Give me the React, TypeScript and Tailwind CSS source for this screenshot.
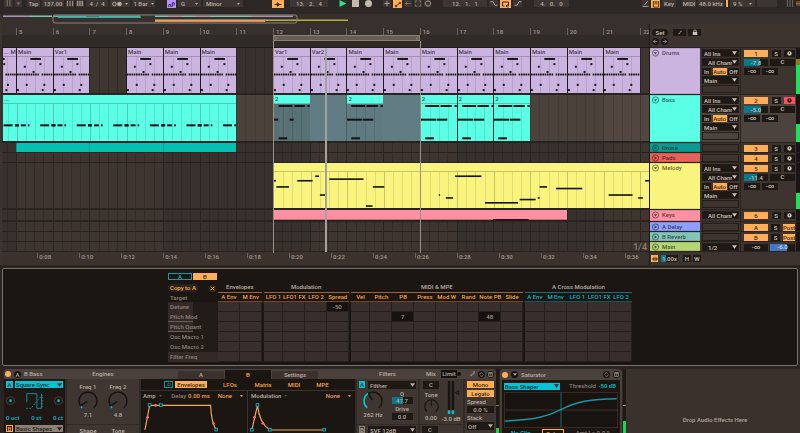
import { clsx } from "clsx";
import type { ReactNode } from "react";

const FIRST_BAR = 4.62;
const BARS = 17.62;

const pct = (bars: number) => `${(bars / BARS) * 100}%`;
const at = (bar: number) => pct(bar - FIRST_BAR);

type Note = [x: number, y: number, w: number];

// note tables use 110 units to the bar, 111 units top to bottom
const DRUM_NOTES: Note[] = [
  [41, 6, 33],
  [69, 22, 6],
  [21, 30, 6],
  [48, 46, 6],
  [27, 86, 6],
  [81, 86, 6],
  [0, 102, 6],
  [76, 102, 6],
];
const HATS = [0, 7, 14, 21, 28, 35, 42, 49, 56, 63, 76, 83, 90, 97, 104];
const BASS_LOW: Note[] = [
  [-6, 64, 12],
  [12, 64, 15],
  [33, 64, 5],
  [70, 64, 27],
  [104, 64, 12],
];
const BASS_A: Note[] = [
  [14, 6, 42],
  [63, 6, 32],
  [103, 6, 7],
  [0, 47, 13],
  [48, 47, 13],
  [14, 103, 27],
];
const BASS_B: Note[] = [
  [13, 6, 43],
  [60, 6, 35],
  [103, 6, 7],
  [0, 47, 46],
  [48, 47, 33],
  [13, 103, 27],
];
const MELODY: Note[] = [
  [0, 27, 6],
  [7, 46, 38],
  [70, 27, 46],
  [124, 13, 11],
  [138, 71, 17],
  [166, 22, 103],
  [276, 105, 20],
  [297, 46, 34],
  [495, 71, 4],
  [516, 80, 22],
  [544, 13, 79],
  [634, 95, 99],
  [738, 85, 48],
  [792, 80, 6],
  [798, 46, 22],
  [847, 51, 79],
  [1005, 71, 72],
  [1094, 80, 14],
  [1115, 27, 14],
];

function Notes({ from, to, notes, tall = 6 }: { from: number; to: number; notes: Note[]; tall?: number }) {
  return (
    <svg
      className="absolute inset-0 h-full w-full"
      viewBox={`${from * 110} 0 ${(to - from) * 110} 111`}
      preserveAspectRatio="none"
    >
      {notes.map(([x, y, w], i) => (
        <rect key={i} x={x} y={y - tall / 2} width={w} height={tall} fill="#141416" />
      ))}
    </svg>
  );
}

function BeatLines({ from, to, color }: { from: number; to: number; color: string }) {
  const beats: number[] = [];
  for (let b = Math.ceil(from * 4 + 0.01); b < to * 4; b++) beats.push(b / 4);
  return (
    <>
      {beats.map((b) => (
        <div
          key={b}
          className={clsx("absolute inset-y-0 w-px", color, Number.isInteger(b) ? "opacity-100" : "opacity-50")}
          style={{ left: `${((b - from) / (to - from)) * 100}%` }}
        />
      ))}
    </>
  );
}

function Clip({
  from,
  to,
  label,
  head,
  body,
  children,
}: {
  from: number;
  to: number;
  label?: string;
  head: string;
  body: string;
  children?: ReactNode;
}) {
  return (
    <div
      className="absolute inset-y-0 flex flex-col overflow-hidden border-l border-black/25"
      style={{ left: at(from), width: pct(to - from) }}
    >
      <div className={clsx("h-[9px] shrink-0 overflow-hidden border-b border-black/20 pl-px whitespace-nowrap text-black/70", head)}>
        {label}
      </div>
      <div className={clsx("relative flex-1", body)}>
        <BeatLines from={from} to={to} color="bg-black/20" />
        {children}
      </div>
    </div>
  );
}

const DRUM_CLIPS = [
  { from: FIRST_BAR, to: 5, label: "... M" },
  { from: 5, to: 6, label: "Main" },
  { from: 6, to: 7, label: "Var1" },
  { from: 8, to: 9, label: "Main" },
  { from: 9, to: 10, label: "Main" },
  { from: 10, to: 11, label: "Main" },
  { from: 12, to: 13, label: "Var1" },
  { from: 13, to: 14, label: "Var2" },
  ...[14, 15, 16, 17, 18, 19, 20, 21].map((b) => ({ from: b, to: b + 1, label: "Main" })),
];

function DrumLane() {
  return DRUM_CLIPS.map((c) => {
    const start = c.from % 1;
    return (
      <Clip key={c.from} {...c} head="bg-[#cbb5e0]" body="bg-[#cbb5e0]">
        <Notes
          from={start}
          to={start + c.to - c.from}
          notes={[...DRUM_NOTES, ...HATS.map((x): Note => [x, 54, 5])]}
        />
      </Clip>
    );
  });
}

function BassLane() {
  const low = [4, 5, 6, 7, 8, 9, 10].flatMap((b) => BASS_LOW.map(([x, y, w]): Note => [x + b * 110, y, w]));
  return (
    <>
      <Clip from={FIRST_BAR} to={11} label="..." head="bg-[#5bffe5]" body="bg-[#5bffe5]">
        <Notes from={FIRST_BAR} to={11} notes={low} />
      </Clip>
      <div className="absolute inset-y-0 bg-[#627c84]" style={{ left: at(12), width: pct(4) }} />
      <Clip from={12} to={13} label="2" head="bg-[#5bffe5]" body="bg-[#577175]">
        <Notes from={0} to={1} notes={BASS_A} />
      </Clip>
      <Clip from={14} to={15} label="2" head="bg-[#5bffe5]" body="bg-[#607a82]">
        <Notes from={0} to={1} notes={BASS_B} />
      </Clip>
      {[16, 17, 18].map((b) => (
        <Clip key={b} from={b} to={b + 1} label="2" head="bg-[#5bffe5]" body="bg-[#5bffe5]">
          <Notes from={0} to={1} notes={BASS_B} />
        </Clip>
      ))}
    </>
  );
}

function DroneLane() {
  return [5, 7, 9].map((b) => (
    <div
      key={b}
      className="absolute inset-y-0 border-l border-[#03948a] bg-[#04c0b3]"
      style={{ left: at(b), width: pct(2) }}
    />
  ));
}

function MelodyLane() {
  return (
    <Clip from={12} to={FIRST_BAR + BARS} head="bg-[#f9f47e]" body="bg-[#f9f47e]">
      <Notes from={0} to={FIRST_BAR + BARS - 12} notes={MELODY} tall={5} />
    </Clip>
  );
}

function KeysLane() {
  return (
    <div
      className="absolute inset-y-0 border-b border-[#c36a79] bg-[#ff90a3]"
      style={{ left: at(12), width: pct(8) }}
    >
      <div className="absolute -bottom-px left-[75%] h-px w-[12%] bg-[#1a1114]" />
    </div>
  );
}

type Track = {
  name: string;
  open: boolean;
  height: string;
  color: string;
  button: string;
  volume?: string;
  fill?: number;
  level?: number;
  armed?: boolean;
  lane?: ReactNode;
};

const TRACKS: Track[] = [
  { name: "Drums", open: true, height: "h-[47px]", color: "bg-[#cbb5e0]", button: "1", volume: "-7.8", fill: 66, level: 64, lane: <DrumLane /> },
  { name: "Bass", open: true, height: "h-[48px]", color: "bg-[#5bffe5]", button: "2", volume: "-5.0", fill: 70, level: 38, armed: true, lane: <BassLane /> },
  { name: "Drone", open: false, height: "h-[10px]", color: "bg-[#0a9b90]", button: "3", lane: <DroneLane /> },
  { name: "Pads", open: false, height: "h-[10px]", color: "bg-[#e5635a]", button: "4" },
  { name: "Melody", open: true, height: "h-[47px]", color: "bg-[#f9f47e]", button: "5", volume: "-11.4", fill: 55, level: 35, lane: <MelodyLane /> },
  { name: "Keys", open: true, height: "h-[12px]", color: "bg-[#ff90a3]", button: "6", lane: <KeysLane /> },
  { name: "A Delay", open: false, height: "h-[10px]", color: "bg-[#8f9ffb]", button: "A" },
  { name: "B Reverb", open: false, height: "h-[10px]", color: "bg-[#84c4b8]", button: "B" },
  { name: "Main", open: false, height: "h-[10px]", color: "bg-[#b5d675]", button: "M" },
];

function Caret({ className = "h-[4px] w-[5px]" }: { className?: string }) {
  return (
    <svg viewBox="0 0 6 4" className={clsx("shrink-0", className)}>
      <path d="M0 0h6L3 4z" fill="currentColor" />
    </svg>
  );
}

function Select({ label, value, className, inset = "pl-px" }: { label: string; value: string; className: string; inset?: string }) {
  return (
    <div className={clsx("relative flex items-center", className)}>
      <select
        aria-label={label}
        className={clsx("h-full w-full appearance-none overflow-hidden pr-[6px] leading-[7px]", inset)}
      >
        <option>{value}</option>
      </select>
      <Caret className="pointer-events-none absolute right-px h-[4px] w-[5px]" />
    </div>
  );
}

function Glyph({ d, className = "h-[7px] w-[8px]", fill = "none" }: { d: string; className?: string; fill?: string }) {
  return (
    <svg viewBox="0 0 8 8" className={clsx("shrink-0", className)} fill={fill} stroke="currentColor" strokeWidth="1">
      <path d={d} />
    </svg>
  );
}

const fieldBase = "flex h-[7px] items-center bg-[#3d3531] leading-[7px] whitespace-nowrap";
const field = `${fieldBase} justify-center`;
const menuField = `${fieldBase} justify-between px-[3px]`;

function Toolbar() {
  return (
    <header className="flex h-[14px] shrink-0 items-start gap-[2px] bg-[#2d2825] pl-[4px] text-[#b9ada2]">
      <button aria-label="Link" className={clsx(field, "w-[9px] text-[#8a7e75]")}>
        <Glyph d="M2 0v7M5 0v7" />
      </button>
      <button aria-label="Link options" className={clsx(field, "mr-[3px] w-[7px] text-[#6a5f57]")}>
        <Caret />
      </button>
      <button className={clsx(field, "w-[13px]")}>Tap</button>
      <input aria-label="Tempo" defaultValue="137.00" className={clsx(field, "w-[22px] text-center")} />
      <button aria-label="Nudge down" className={clsx(field, "w-[8px]")}>
        <Glyph d="M1 1v6M4 1v6M7 1v6" />
      </button>
      <button aria-label="Nudge up" className={clsx(field, "w-[8px]")}>
        <Glyph d="M1 1v6M3 1v6M5 1v6M7 1v6" />
      </button>
      <input aria-label="Time signature" defaultValue="4  /  4" className={clsx(field, "w-[22px] text-center whitespace-pre")} />
      <button aria-label="Metronome" className={clsx(field, "w-[20px] gap-[3px]")}>
        <svg viewBox="0 0 10 6" className="h-[6px] w-[10px]">
          <circle cx="2.5" cy="3" r="1.8" fill="none" stroke="currentColor" />
          <circle cx="7.5" cy="3" r="2.3" fill="currentColor" />
        </svg>
        <Caret className="h-[2px] w-[3px]" />
      </button>
      <button className={clsx(field, "w-[23px] gap-[3px]")}>
        1 Bar <Caret className="h-[2px] w-[3px]" />
      </button>
      <button aria-label="Scale" className="ml-[10px] h-[8px] w-[9px] bg-[#b492ff] text-[#2a1f3a]">
        <Glyph d="M1 7V4h2v2h2V2h2v3" className="h-[7px] w-[9px]" />
      </button>
      <button className={clsx(menuField, "w-[23px]")}>
        G <Caret className="h-[2px] w-[3px]" />
      </button>
      <button className={clsx(menuField, "w-[40px]")}>
        Minor <Caret className="h-[2px] w-[3px]" />
      </button>

      <button aria-label="Follow" className="ml-[27px] flex h-[8px] w-[12px] items-center justify-center bg-[#ffad56] text-[#33261a]">
        <Glyph d="M0 4h8M3 2v4L6 4z" fill="currentColor" />
      </button>
      <input aria-label="Position" defaultValue="13.   2.   4" className={clsx(field, "ml-[4px] w-[38px] text-center whitespace-pre")} />
      <button aria-label="Play" className="ml-[9px] text-[#2fdc8b]">
        <svg viewBox="0 0 8 8" className="h-[7px] w-[8px]">
          <path d="M0 0l8 4-8 4z" fill="currentColor" />
        </svg>
      </button>
      <button aria-label="Stop" className="ml-[3px] h-[7px] w-[7px] bg-[#c5b9ae]" />
      <button aria-label="Record" className="ml-[4px] h-[7px] w-[7px] rounded-full bg-[#c5b9ae]" />
      <button aria-label="Overdub" className={clsx(field, "ml-[9px] w-[8px]")}>
        <Glyph d="M1 4h6M4 1v6" />
      </button>
      <button aria-label="Automation arm" className="flex h-[8px] w-[9px] items-center justify-center bg-[#ffad56] text-[#33261a]">
        <Glyph d="M1 6.500h1.500v-1.500h-1.500zM2.500 5L5.500 3M5.500 1.500h1.500v1.500h-1.500z" />
      </button>
      <button aria-label="Re-enable automation" className={clsx(field, "w-[8px] text-[#83776e]")}>
        <Glyph d="M7 4H1M3 2L1 4l2 2" />
      </button>
      <button aria-label="Capture" className={clsx(field, "w-[8px] text-[#83776e]")}>
        <Glyph d="M1 3V1h2M5 1h2v2M7 5v2H5M3 7H1V5" />
      </button>
      <button aria-label="Session record" className={clsx(field, "w-[7px]")}>
        <Glyph d="M4 1a3 3 0 1 0 .01 0z" />
      </button>
      <input aria-label="Loop start" defaultValue="12.   1.   1" className={clsx(field, "ml-[10px] w-[44px] text-center whitespace-pre")} />
      <button aria-label="Punch in" className={clsx(field, "w-[9px]")}>
        <Glyph d="M0 2h3l2 4h3" />
      </button>
      <button aria-label="Loop" className="flex h-[8px] w-[11px] items-center justify-center bg-[#ffad56] text-[#33261a]">
        <Glyph d="M3 6H1V2h6v4H5M6 4.500L4.500 6 6 7.500" className="h-[8px] w-[9px]" />
      </button>
      <button aria-label="Punch out" className={clsx(field, "w-[9px]")}>
        <Glyph d="M0 6h3l2-4h3" />
      </button>
      <input aria-label="Loop length" defaultValue="4.   0.   0" className={clsx(field, "ml-[10px] w-[35px] text-center whitespace-pre")} />

      <button aria-label="Draw mode" className={clsx(field, "ml-auto w-[7px]")}>
        <Glyph d="M2 6l4-5M0 7.500h7" />
      </button>
      <button aria-label="Computer keyboard" className="flex h-[8px] w-[9px] items-center justify-center bg-[#ffad56] text-[#33261a]">
        <Glyph d="M1 0v7h6V0M3 0v4M5 0v4" />
      </button>
      <button className={clsx(field, "w-[14px]")}>Key</button>
      <button className={clsx(field, "ml-[4px] w-[14px]")}>MIDI</button>
      <span className={clsx(field, "w-[26px]")}>48.0 kHz</span>
      <span className="h-[7px] w-[2px] bg-[#ffad56]" />
      <button className={clsx(menuField, "w-[25px]")}>
        9 % <Caret className="h-[2px] w-[3px]" />
      </button>
      <span className={clsx(field, "w-[20px]")} />
      <button aria-label="Session view" className="ml-[7px] text-[#7c7067]">
        <Glyph d="M1 0v8M4 0v8M7 0v8" />
      </button>
      <button aria-label="Arrangement view" className="text-[#ffad56]">
        <Glyph d="M0 1h8M0 4h8M0 7h8" className="h-[7px] w-[4px]" />
      </button>
    </header>
  );
}

const OVERVIEW: [x: number, y: number, w: number, color: string][] = [
  [3, 1, 27, "#a893bd"],
  [30, 1, 22, "#79c3bd"],
  [53, 1, 87, "#6fb9b4"],
  [58, 2, 83, "#37aaa1"],
  [86, 1, 13, "#4f7b6c"],
  [155, 1, 13, "#79c3bd"],
  [168, 1, 14, "#a893bd"],
  [182, 1, 14, "#79c3bd"],
  [196, 1, 14, "#a893bd"],
  [210, 1, 42, "#79c3bd"],
  [252, 1, 41, "#a893bd"],
  [155, 5, 110, "#e8c15f"],
  [155, 6, 110, "#d98a5c"],
  [265, 5, 83, "#b5ae45"],
];

function Overview() {
  return (
    <svg viewBox="0 0 800 10" preserveAspectRatio="none" className="h-[10px] w-full shrink-0 bg-[#37302c]">
      {OVERVIEW.map(([x, y, w, color], i) => (
        <rect key={i} x={x} y={y + 0.5} width={w} height="1.500" fill={color} />
      ))}
      <rect x="53" y="1" width="244" height="8" rx="2" fill="none" stroke="#8d8178" />
    </svg>
  );
}

function BarRuler() {
  return (
    <div className="relative h-[24px] shrink-0 border-b border-[#1f1a17]">
      <div className="absolute inset-x-0 top-[11px] bottom-0 bg-black/10" />
      {Array.from({ length: 18 }, (_, i) => i + 5).map((bar) => (
        <span
          key={bar}
          className="absolute top-[4px] h-[7px] border-l border-[#6d625a] pl-[2px] leading-[8px] text-[#a3978d]"
          style={{ left: at(bar) }}
        >
          {bar}
        </span>
      ))}
      <div
        className="absolute top-[11px] flex h-[6px] items-center justify-between border border-[#8b8076] bg-[#675d54] text-[#a3978d]"
        style={{ left: at(12), width: pct(4) }}
      >
        <Glyph d="M1 1l4 3-4 3" className="h-[5px] w-[5px]" />
        <Glyph d="M7 1L3 4l4 3" className="h-[5px] w-[5px]" />
      </div>
    </div>
  );
}

function TimeRuler() {
  return (
    <div className="relative h-[13px] shrink-0 bg-[#3b322e]">
      {Array.from({ length: 15 }, (_, i) => i).map((i) => (
        <span
          key={i}
          className="absolute top-px h-[5px] border-l border-[#6d625a] pl-px leading-[8px] text-[#a3978d]"
          style={{ left: at(5.58 + i * 1.143) }}
        >
          0:{String(8 + i * 2).padStart(2, "0")}
        </span>
      ))}
    </div>
  );
}

function Timeline() {
  const end = FIRST_BAR + BARS;
  return (
    <div className="relative flex min-w-0 flex-1 flex-col overflow-hidden bg-[#37302c]">
      <BarRuler />
      <div className="relative">
        {[5, 13, 21].map((b) => (
          <div key={b} className="absolute inset-y-0 bg-[#3e3530]" style={{ left: at(b), width: pct(4) }} />
        ))}
        <BeatLines from={FIRST_BAR} to={end} color="bg-[#2a2421]" />
        {TRACKS.map((t) => (
          <div
            key={t.name}
            className={clsx(
              "relative border-[#29231f]",
              t.height,
              t.name === "Bass" && "bg-[#ffddd0]/10",
              t.open ? "border-b-2" : "border-b",
            )}
          >
            {t.lane}
            {t.name === "Main" && (
              <span className="absolute right-[2px] bottom-0 text-[9px] leading-[8px] text-[#8d8178]">1/4</span>
            )}
          </div>
        ))}
      </div>
      <TimeRuler />
      {[12, 16].map((b) => (
        <div key={b} className="absolute top-[17px] bottom-[12px] w-px bg-[#9b9087]" style={{ left: at(b) }} />
      ))}
      <div className="absolute top-[24px] bottom-[13px] w-[2px] bg-[#a5a0a2]" style={{ left: at(13.42) }} />
    </div>
  );
}

const box = "border border-[#241d1a] bg-[#1f1916] text-[#cfc3b8]";

function TrackInputs({ track }: { track: Track }) {
  const channel = (
    <Select label={`${track.name} channel`} value="All Channels" inset="pl-[5px]" className={clsx("h-[8px]", box)} />
  );
  if (track.name === "Main") return <Select label="Cue out" value="1/2" inset="pl-[5px]" className={clsx("h-[8px]", box)} />;
  if (track.name === "Keys") return channel;
  if (!track.open) return <div className="h-[8px] border border-[#241d1a]" />;
  return (
    <>
      <Select label={`${track.name} input`} value="All Ins" className={clsx("h-[8px]", box)} />
      {channel}
      <div className="flex h-[8px] items-center justify-between text-[#cfc3b8]">
        <button className="h-[7px] w-[9px] bg-[#1f1916] leading-[7px]">In</button>
        <button className="h-[7px] w-[14px] bg-[#ffad56] leading-[7px] text-[#3a2a1a]">Auto</button>
        <button className="h-[7px] w-[11px] bg-[#1f1916] leading-[7px]">Off</button>
      </div>
      <Select label={`${track.name} output`} value="Main" className={clsx("h-[8px]", box)} />
      <div className="h-[8px] border border-[#241d1a]" />
    </>
  );
}

function TrackMixer({ track }: { track: Track }) {
  const send = track.name === "A Delay" || track.name === "B Reverb";
  if (track.name === "Main") {
    return (
      <div className="flex h-[8px] items-center justify-between">
        <input aria-label="Cue volume" defaultValue="-∞" className="h-[7px] w-[24px] bg-[#1f1916] text-center text-[#cfc3b8]" />
        <input aria-label="Main volume" defaultValue="-6.0" className="h-[7px] w-[25px] bg-linear-to-r from-[#4377c4] from-70% to-[#1f1916] to-70% text-center text-[#cfdcf0]" />
      </div>
    );
  }
  return (
    <>
      <div className="flex h-[8px] items-center justify-between">
        <button className="h-[7px] w-[24px] bg-[#ffad56] leading-[7px] text-[#3a2a1a]">{track.button}</button>
        <button className="h-[7px] w-[9px] bg-[#1f1916] leading-[7px] text-[#cfc3b8]">S</button>
        {send ? (
          <button className="h-[7px] w-[12px] bg-[#ffad56] leading-[7px] text-[#3a2a1a]">Post</button>
        ) : (
          <button
            aria-label={`Arm ${track.name}`}
            className={clsx("flex h-[7px] w-[11px] items-center justify-center", track.armed ? "bg-[#ff4d5c] text-[#2a1013]" : "bg-[#1f1916] text-[#cfc3b8]")}
          >
            <svg viewBox="0 0 6 6" className="h-[5px] w-[5px]">
              <circle cx="3" cy="3" r="2.600" fill="currentColor" />
              <path d="M3 1.500v2" stroke={track.armed ? "#ff4d5c" : "#1f1916"} />
            </svg>
          </button>
        )}
      </div>
      {track.volume && (
        <>
          <div className="flex h-[8px] items-center justify-between text-[#cfc3b8]">
            <div className="relative h-[7px] w-[24px] bg-[#1f1916]">
              <div className="absolute inset-y-0 left-0 bg-[#08788a]" style={{ width: `${track.fill}%` }} />
              <input
                aria-label={`${track.name} volume`}
                defaultValue={track.volume}
                className="absolute inset-0 w-full text-center leading-[7px]"
              />
            </div>
            <input aria-label={`${track.name} pan`} defaultValue="C" className="h-[7px] w-[25px] bg-[#1f1916] text-center" />
          </div>
          <div className="flex h-[8px] items-center gap-[2px] text-[#cfc3b8]">
            <input aria-label={`${track.name} send A`} defaultValue="-∞" className="h-[7px] w-[16px] bg-[#1f1916] text-center" />
            <input aria-label={`${track.name} send B`} defaultValue="-∞" className="h-[7px] w-[16px] bg-[#1f1916] text-center" />
          </div>
        </>
      )}
    </>
  );
}

function TrackHeader({ track }: { track: Track }) {
  return (
    <div className={clsx("flex border-b border-[#29231f]", track.height, track.name === "Bass" && "bg-[#4c423e]")}>
      <div className={clsx("flex w-[50px] items-start gap-[3px] border-y border-black/10 pl-[2px] text-black/65", track.color)}>
        <button aria-label={`Fold ${track.name}`}>
          <svg viewBox="0 0 8 8" className="h-[8px] w-[7px]">
            <circle cx="4" cy="4" r="3.500" fill="none" stroke="currentColor" strokeWidth=".8" />
            <path d={track.open ? "M2.200 3h3.600L4 5.800z" : "M3 2.200v3.600L5.800 4z"} fill="currentColor" />
          </svg>
        </button>
        <span>{track.name}</span>
      </div>
      <div className="flex w-[41px] flex-col gap-px border-r border-[#29231f] pt-px pr-px pl-[2px]">
        <TrackInputs track={track} />
      </div>
      <div className="flex w-[55px] flex-col gap-px pt-px pr-px pl-[3px]">
        <TrackMixer track={track} />
      </div>
      <div className="flex w-[4px] flex-col justify-end bg-[#1a1512]">
        {track.name === "Drums" && <div className="h-[6px] bg-[#8c7d1a]" />}
        {track.level && <div className="bg-[#1fe05a]" style={{ height: `${track.level}%` }} />}
      </div>
    </div>
  );
}

function TrackList() {
  return (
    <div className="flex shrink-0 flex-col border-l border-[#1f1a17]">
      <div className="h-[24px] border-b border-[#29231f] pt-[4px] pl-[2px] text-[#cfc3b8]">
        <div className="flex h-[8px] items-center">
          <button className="h-[7px] w-[16px] rounded-full bg-[#1f1916] leading-[7px]">Set</button>
          <button aria-label="Automation" className="ml-[5px] flex h-[7px] w-[13px] items-center justify-center bg-[#1f1916]">
            <Glyph d="M1 6h2L5 2h2" className="h-[5px] w-[6px]" />
          </button>
          <button aria-label="Lock envelopes" className="ml-[2px] flex h-[7px] w-[13px] items-center justify-center bg-[#1f1916]">
            <svg viewBox="0 0 8 8" className="h-[6px] w-[6px]">
              <path d="M1 4h6v4H1z" fill="currentColor" />
              <path d="M2.500 4V1.500h3V4" fill="none" stroke="currentColor" />
            </svg>
          </button>
        </div>
        <div className="mt-[2px] flex gap-[2px]">
          <button aria-label="Previous locator" className="flex h-[7px] w-[7px] items-center justify-center rounded-full bg-[#1a1512]">
            <Glyph d="M7 4H1M4 1L1 4l3 3" className="h-[5px] w-[5px]" />
          </button>
          <button aria-label="Next locator" className="flex h-[7px] w-[7px] items-center justify-center rounded-full bg-[#1a1512]">
            <Glyph d="M1 4h6M4 1l3 3-3 3" className="h-[5px] w-[5px]" />
          </button>
        </div>
      </div>
      {TRACKS.map((t) => (
        <TrackHeader key={t.name} track={t} />
      ))}
      <div className="flex h-[13px] items-center pl-px text-[#cfc3b8]">
        <button aria-label="Optimize height" className="flex h-[7px] w-[7px] items-center justify-center bg-[#ffad56] text-[#33261a]">
          <Glyph d="M0 4h8M2 2v4M4 1v6M6 2v4" className="h-[6px] w-[6px]" />
        </button>
        <input
          aria-label="Waveform zoom"
          defaultValue="1.00x"
          className="ml-[3px] h-[7px] w-[17px] bg-linear-to-r from-[#08788a] from-30% to-[#1f1916] to-30% text-center"
        />
        <button className="ml-[5px] h-[7px] w-[8px] bg-[#1f1916] leading-[7px]">H</button>
        <button className="ml-[2px] h-[7px] w-[8px] bg-[#1f1916] leading-[7px]">W</button>
      </div>
    </div>
  );
}

const MATRIX_GROUPS = [
  { name: "Envelopes", teal: false, cols: ["A Env", "M Env"] },
  { name: "Modulation", teal: false, cols: ["LFO 1", "LFO1 FX", "LFO 2", "Spread"] },
  { name: "MIDI & MPE", teal: false, cols: ["Vel", "Pitch", "PB", "Press", "Mod W", "Rand", "Note PB", "Slide"] },
  { name: "A Cross Modulation", teal: true, cols: ["A Env", "M Env", "LFO 1", "LFO1 FX", "LFO 2"] },
];

const TARGETS: { name: string; shade: string; values?: Record<string, string> }[] = [
  { name: "Detune", shade: "w-1/2", values: { Spread: "-50" } },
  { name: "Pitch Mod", shade: "w-1/2 border-b border-[#6a5f57]", values: { PB: "7", "Note PB": "48" } },
  { name: "Pitch Quant", shade: "w-1/2 border-b border-[#6a5f57]" },
  { name: "Osc Macro 1", shade: "w-0" },
  { name: "Osc Macro 2", shade: "w-0" },
  { name: "Filter Freq", shade: "w-full" },
];

function ModMatrix() {
  return (
    <section className="mx-[2px] mt-[3px] shrink-0 rounded-xs border border-[#7d7067] bg-[#1c1613] pt-[4px] pb-[3px]">
      <div className="mx-auto w-[464px]">
        <div className="mb-[3px] flex gap-px">
          <button className="h-[7px] w-[24px] border border-[#149aa8] leading-[5px] text-[#17b3c2]">A</button>
          <button className="h-[7px] w-[24px] bg-[#ffad56] leading-[7px] text-[#3a2a1a]">B</button>
        </div>
        <table className="w-full table-fixed border-separate border-spacing-0 leading-[8px] whitespace-nowrap">
          <colgroup>
            <col className="w-[50px]" />
          </colgroup>
          <thead>
            <tr>
              <td className="h-[10px] p-0">
                <div className="flex items-center justify-between pr-[2px]">
                  <button className="h-[8px] rounded-full bg-[#2a221e] px-[2px] text-[#ffad56]">Copy to A</button>
                  <button aria-label="Close" className="flex h-[7px] w-[7px] items-center justify-center rounded-full bg-[#33291f] text-[#ffad56]">
                    <Glyph d="M2 2l4 4M6 2L2 6" className="h-[7px] w-[7px]" />
                  </button>
                </div>
              </td>
              {MATRIX_GROUPS.map((g, i) => (
                <th
                  key={g.name}
                  colSpan={g.cols.length}
                  className={clsx("h-[10px] p-0 font-medium text-[#b9ada2]", i > 0 && "border-l-2 border-l-[#1c1613]")}
                >
                  <div className={clsx("h-[10px] border-b", g.teal ? "border-[#157078]" : "border-[#9a6838]")}>{g.name}</div>
                </th>
              ))}
            </tr>
            <tr>
              <th className="h-[9px] p-0 pl-[2px] text-left font-medium text-[#8d8178]">Target</th>
              {MATRIX_GROUPS.map((g, gi) =>
                g.cols.map((c, i) => (
                  <th
                    key={g.name + c}
                    className={clsx(
                      "h-[9px] border-b p-0 font-medium",
                      g.teal ? "border-b-[#14565b] text-[#17b3c2]" : "border-b-[#6e4a2a] text-[#f0a04f]",
                      gi > 0 && i === 0 && "border-l-2 border-l-[#1c1613]",
                    )}
                  >
                    <div className="-mx-[2px]">{c}</div>
                  </th>
                )),
              )}
            </tr>
          </thead>
          <tbody>
            {TARGETS.map((t) => (
              <tr key={t.name}>
                <th className="h-[10px] p-0 text-left font-medium text-[#8d8178]">
                  <div className="relative h-[10px] bg-[#221b18] pl-[2px] leading-[10px]">
                    <div className={clsx("absolute inset-y-0 left-0 bg-[#332a27]", t.shade)} />
                    <span className="relative">{t.name}</span>
                  </div>
                </th>
                {MATRIX_GROUPS.map((g, gi) =>
                  g.cols.map((c, i) => {
                    const value = t.values?.[c];
                    return (
                      <td
                        key={g.name + c}
                        className={clsx(
                          "h-[10px] border-r border-b border-r-[#271f1c] border-b-[#271f1c] p-0 text-center text-[#a3978d]",
                          value ? "bg-[#17110f]" : "bg-[#382e2b]",
                          gi > 0 && i === 0 && "border-l-2 border-l-[#1c1613]",
                        )}
                      >
                        {value}
                      </td>
                    );
                  }),
                )}
              </tr>
            ))}
          </tbody>
        </table>
      </div>
    </section>
  );
}

function arc(r: number, a: number, b: number) {
  const p = (deg: number) => {
    const t = ((deg - 90) * Math.PI) / 180;
    return `${(r * Math.cos(t)).toFixed(2)} ${(r * Math.sin(t)).toFixed(2)}`;
  };
  return `M${p(a)}A${r} ${r} 0 ${b - a > 180 ? 1 : 0} 1 ${p(b)}`;
}

function Knob({ value, className = "h-[20px] w-[20px]", centred = false }: { value: number; className?: string; centred?: boolean }) {
  const angle = -140 + 280 * value;
  return (
    <svg viewBox="-10 -10 20 20" className={className} fill="none">
      <path d={arc(9, -140, 140)} stroke="#191310" strokeWidth="1.500" />
      {!centred && <path d={arc(9, -140, Math.max(angle, -128))} stroke="#12bccb" strokeWidth="1.800" />}
      <path d="M0 -1V-8" stroke="#191310" strokeWidth="1.500" transform={`rotate(${Math.max(angle, -122)})`} />
    </svg>
  );
}

function KnobField({ label, value, text }: { label: string; value: number; text: string }) {
  return (
    <div className="flex w-[22px] flex-col items-center whitespace-nowrap">
      <span>{label}</span>
      <Knob value={value} />
      <span>{text}</span>
    </div>
  );
}

function Handle({ x, y }: { x: number; y: number }) {
  return <rect x={x - 4} y={y - 4} width="8" height="8" fill="#1c1613" stroke="#12bccb" strokeWidth="2.500" />;
}

function Oscillator() {
  return (
    <div className="bg-[#1e1714] px-[2px] pt-[2px] text-[#12bccb]">
      <div className="flex gap-[2px]">
        <button className="h-[7px] w-[7px] bg-[#05c2d4] leading-[7px] text-[#102a2e]">A</button>
        <Select label="Oscillator A" value="Square Sync" className="h-[7px] flex-1 bg-[#05c2d4] text-[#102a2e]" />
      </div>
      <svg viewBox="0 0 170 63" className="mt-[3px] h-[21px] w-full" fill="none">
        <circle cx="13" cy="29" r="12" stroke="#4a3f3a" strokeWidth="3" />
        <circle cx="13" cy="29" r="4" fill="#12bccb" />
        <circle cx="157" cy="29" r="12" stroke="#4a3f3a" strokeWidth="3" />
        <circle cx="157" cy="29" r="4" fill="#12bccb" />
        <path d="M62 34V8h30v44h14V8" stroke="#0d8d99" strokeWidth="3" />
        <path d="M60 52h14L108 12v40" stroke="#0d8d99" strokeWidth="3" strokeDasharray="5 4" />
      </svg>
      <div className="mt-[2px] flex justify-between whitespace-nowrap">
        <span>0 oct</span>
        <span>0 st</span>
        <span>0 ct</span>
      </div>
      <div className="mt-[3px] flex gap-[2px]">
        <button className="h-[7px] w-[7px] border border-[#ffad56] leading-[5px] text-[#ffad56]">B</button>
        <Select label="Oscillator B" value="Basic Shapes" className="h-[7px] flex-1 bg-[#8d8076] text-[#231c19]" />
      </div>
    </div>
  );
}

function Envelopes() {
  return (
    <div className="flex flex-col bg-[#1c1613] text-[#f0a04f]">
      <nav className="flex h-[12px] items-center border-b border-[#3b322e] pl-[23px]">
        <button aria-label="Show on display" className="flex h-[7px] w-[9px] items-center justify-center border border-[#12939f] text-[#12bccb]">
          <Glyph d="M4 2a2 2 0 1 0 .01 0z" className="h-[5px] w-[6px]" />
        </button>
        <button className="ml-[2px] h-[7px] w-[32px] bg-[#ffad56] leading-[7px] text-[#3a2a1a]">Envelopes</button>
        <button className="ml-[7px] w-[32px]">LFOs</button>
        <button className="w-[34px]">Matrix</button>
        <button className="w-[28px]">MIDI</button>
        <button className="w-[29px]">MPE</button>
      </nav>
      <div className="grid flex-1 grid-cols-2">
        <div className="border-r border-[#3b322e]">
          <div className="flex h-[9px] items-center pr-[4px] pl-[2px] whitespace-nowrap">
            <button className="flex items-center gap-[3px] text-[#b9ada2]">
              Amp <Caret className="h-[2px] w-[3px] text-[#5d524b]" />
            </button>
            <span className="ml-auto text-[#8d8178]">Delay</span>
            <span className="ml-[2px]">0.00 ms</span>
            <button className="ml-[8px] flex items-center gap-[8px]">
              None <Caret className="h-[2px] w-[3px]" />
            </button>
          </div>
          <svg viewBox="0 0 320 99" className="h-[33px] w-full" fill="none">
            <path d="M12 90L26 16H210Q213 70 227 90" stroke="#f0a85c" strokeWidth="3.500" />
            <circle cx="20" cy="52" r="4" fill="#ff6b7c" />
            <circle cx="44" cy="16" r="4" fill="#ff6b7c" />
            <circle cx="219" cy="71" r="4" fill="#ff6b7c" />
            <Handle x={26} y={15} />
            <Handle x={60} y={15} />
            <Handle x={227} y={89} />
          </svg>
        </div>
        <div>
          <div className="flex h-[9px] items-center justify-between pr-[4px] pl-[3px] whitespace-nowrap">
            <button className="flex items-center gap-[3px] text-[#b9ada2]">
              Modulation <Caret className="h-[2px] w-[3px] text-[#5d524b]" />
            </button>
            <button className="flex items-center gap-[8px]">
              None <Caret className="h-[2px] w-[3px]" />
            </button>
          </div>
          <svg viewBox="0 0 320 99" className="h-[33px] w-full" fill="none">
            <path d="M11 90L28 16Q34 70 65 90H228" stroke="#f0a85c" strokeWidth="3.500" />
            <circle cx="19" cy="52" r="4" fill="#ff6b7c" />
            <circle cx="44" cy="70" r="4" fill="#ff6b7c" />
            <Handle x={11} y={89} />
            <Handle x={28} y={15} />
            <Handle x={65} y={89} />
            <Handle x={228} y={89} />
          </svg>
        </div>
      </div>
    </div>
  );
}

const panel = "bg-[#3f3632] text-[#b9ada2]";

function Filters() {
  return (
    <div className="flex flex-col gap-px">
      <div className={clsx("h-[45px] px-[2px] pt-[2px]", panel)}>
        <div className="flex gap-[3px]">
          <button className="h-[7px] w-[6px] bg-[#05c2d4] leading-[7px] text-[#102a2e]">A</button>
          <Select label="Filter type" value="Filther" inset="pl-[2px]" className="h-[8px] flex-1 bg-[#1f1916]" />
        </div>
        <div className="mt-[2px] flex justify-between pr-[2px] pl-[2px]">
          <div className="flex w-[24px] flex-col items-center whitespace-nowrap">
            <Knob value={0.38} />
            <span>262 Hz</span>
          </div>
          <div className="flex w-[24px] flex-col items-center text-center">
            <label htmlFor="flt-q" className="leading-[6px]">Q</label>
            <input
              id="flt-q"
              defaultValue="47.7"
              className="h-[7px] w-[21px] bg-linear-to-r from-[#08788a] from-50% to-[#1f1916] to-50% text-center"
            />
            <label htmlFor="flt-drive" className="mt-px leading-[8px]">Drive</label>
            <input id="flt-drive" defaultValue="0.0" className="h-[7px] w-[21px] bg-[#1f1916] text-center" />
          </div>
        </div>
      </div>
      <div className={clsx("flex flex-1 gap-[3px] px-[2px] pt-px", panel)}>
        <button aria-label="Filter B" className="h-[7px] w-[6px] border border-[#8d8076] leading-[5px]">B</button>
        <Select label="Filter B type" value="SVF 12dB" inset="pl-[2px]" className="h-[8px] flex-1 bg-[#1f1916]" />
      </div>
    </div>
  );
}

function Mix() {
  return (
    <div className="flex flex-col gap-px">
      <div className={clsx("flex h-[45px] justify-between px-[2px] pt-[2px]", panel)}>
        <div className="flex w-[18px] flex-col items-center">
          <input aria-label="Filter A pan" defaultValue="C" className="h-[8px] w-[16px] bg-[#1f1916] text-center" />
          <span className="mt-[2px]">Tone</span>
          <Knob value={0.5} centred className="h-[15px] w-[15px]" />
          <span>0.00</span>
        </div>
        <div className="flex w-[20px] flex-col items-center whitespace-nowrap">
          <svg viewBox="0 0 20 35" className="h-[34px] w-[20px]" fill="none">
            <path d="M8 0v30M12 0v30" stroke="#191310" strokeWidth="2.500" />
            <path d="M8 30v4M12 30v4" stroke="#12bccb" strokeWidth="2.500" />
            <path d="M18 10l-3.500 2 3.500 2z" stroke="#191310" />
          </svg>
          <span>-3.0 dB</span>
        </div>
      </div>
      <div className={clsx("flex-1 px-[2px] pt-px", panel)}>
        <input aria-label="Filter B pan" defaultValue="C" className="h-[8px] w-[16px] bg-[#1f1916] text-center" />
      </div>
    </div>
  );
}

function Voices() {
  return (
    <div className={clsx("flex flex-col px-[2px] pt-[2px]", panel)}>
      <button className="h-[7px] bg-[#ffad56] leading-[7px] text-[#3a2a1a]">Mono</button>
      <button className="mt-[2px] h-[7px] bg-[#ffad56] leading-[7px] text-[#3a2a1a]">Legato</button>
      <label htmlFor="spread" className="mt-px">Spread</label>
      <input id="spread" defaultValue="0.0 %" className="h-[7px] w-full bg-[#1f1916] text-center" />
      <span className="mt-px">Stack</span>
      <Select label="Stack" value="Off" className="h-[8px] bg-[#1f1916]" />
    </div>
  );
}

function RoundIcon({ d, label }: { d: string; label: string }) {
  return (
    <button aria-label={label} className="flex h-[7px] w-[7px] items-center justify-center rounded-full bg-[#16100e] text-[#cfc3b8]">
      <Glyph d={d} className="h-[5px] w-[5px]" />
    </button>
  );
}

const SWAP = "M1 4a3 3 0 0 1 5-2M7 4a3 3 0 0 1-5 2";
const DISK = "M1 1h6v6H1zM3 1v2h2V1M3 5h2";

function BassDevice() {
  return (
    <article className="flex shrink-0 flex-col overflow-hidden rounded-t-sm bg-[#322a27]">
      <header className="grid h-[10px] grid-cols-[61px_72px_214px_61px_43px_31px] items-center gap-x-[2px] bg-[#4b413c] text-[#b9ada2]">
        <div className="flex items-center gap-[3px] pl-px whitespace-nowrap">
          <button aria-label="Device on" className="h-[6px] w-[6px] rounded-full bg-[#ffad56]" />
          <span className="flex h-[7px] w-[7px] items-center justify-center rounded-full bg-[#16100e] leading-[7px]">A</span>
          <h2>B Bass</h2>
        </div>
        <span className="text-center">Engines</span>
        <div className="flex h-[10px] items-end justify-center gap-px">
          <button className="h-[8px] w-[46px] bg-[#3b322e]">A</button>
          <button className="h-[9px] w-[46px] bg-[#1c1613] text-[#ffad56]">B</button>
          <button className="h-[8px] w-[46px] bg-[#3b322e]">Settings</button>
        </div>
        <span className="text-center">Filters</span>
        <div className="flex items-center justify-between pr-[2px] pl-[6px]">
          Mix
          <button className="ml-[5px] h-[8px] w-[16px] bg-[#16100e]">Limit</button>
          <span className="h-[4px] w-[4px] rounded-full bg-[#16100e]" />
        </div>
        <div className="flex items-center justify-end gap-[2px] pr-[2px]">
          <Glyph d="M1 6h2V4h3V1M5 1h2" className="h-[6px] w-[7px]" />
          <RoundIcon label="Swap preset" d={SWAP} />
          <RoundIcon label="Save preset" d={DISK} />
        </div>
      </header>
      <div className="grid flex-1 grid-cols-[61px_72px_214px_61px_43px_31px] gap-x-[2px]">
        <Oscillator />
        <div className="flex flex-col gap-px">
          <div className={clsx("flex h-[45px] justify-center gap-[8px] pt-[4px]", panel)}>
            <KnobField label="Freq 1" value={0.03} text="7.1" />
            <KnobField label="Freq 2" value={0.03} text="4.8" />
          </div>
          <div className={clsx("flex flex-1 justify-center gap-[8px] pt-[2px]", panel)}>
            <KnobField label="Shape" value={0.3} text="30 %" />
            <KnobField label="Tone" value={0.5} text="0.0" />
          </div>
        </div>
        <Envelopes />
        <Filters />
        <Mix />
        <Voices />
      </div>
    </article>
  );
}

function Meter({ mark, level }: { mark: string; level: string }) {
  return (
    <div className="flex w-[3px] shrink-0 flex-col bg-[#1f1916]">
      <div className={clsx("mt-[36px] h-px", mark)} />
      <div className={clsx("mt-auto bg-[#1fd455]", level)} />
    </div>
  );
}

function Saturator() {
  return (
    <article className="flex w-[122px] shrink-0 flex-col overflow-hidden rounded-t-sm bg-[#4b413c]">
      <header className="flex h-[11px] shrink-0 items-center gap-[3px] px-[2px] text-[#b9ada2]">
        <button aria-label="Device on" className="h-[6px] w-[6px] rounded-full bg-[#ffad56]" />
        <button aria-label="Fold device" className="flex h-[7px] w-[7px] items-center justify-center rounded-full bg-[#16100e]">
          <Caret className="h-[3px] w-[4px]" />
        </button>
        <h2 className="mr-auto">Saturator</h2>
        <RoundIcon label="Swap preset" d={SWAP} />
        <RoundIcon label="Save preset" d={DISK} />
      </header>
      <div className="mx-[2px] flex-1 bg-[#1c1613] px-[2px] pt-[2px] text-[#8d8178]">
        <div className="flex items-center justify-between pr-[2px]">
          <Select label="Curve" value="Bass Shaper" className="h-[7px] w-[56px] bg-[#05c2d4] text-[#102a2e]" />
          <span>
            Threshold <span className="ml-px text-[#12bccb]">-50 dB</span>
          </span>
        </div>
        <svg viewBox="0 0 342 108" className="mt-[2px] h-[36px] w-full" fill="none">
          <rect x="1" y="1" width="340" height="106" fill="#191310" stroke="#3b322e" strokeWidth="3" />
          <path d="M0 54H342" stroke="#3b322e" strokeWidth="3" />
          <path d="M171 0V108" stroke="#17555b" strokeWidth="4" />
          <path d="M2 87C90 84 130 74 171 53C215 30 260 20 338 20" stroke="#1598a5" strokeWidth="4.500" />
        </svg>
        <div className="mt-px flex items-center justify-between px-[7px] whitespace-nowrap">
          <span className="text-[#12bccb]">No Clip</span>
          <button className="h-[8px] w-[22px] border border-[#ffad56] leading-[7px] text-[#ffad56]">Color</button>
          <span>Amt Lo 0.0 %</span>
        </div>
      </div>
    </article>
  );
}

export default function App() {
  return (
    <div className="flex h-screen flex-col overflow-hidden bg-[#2b2522] font-['Roboto','Liberation_Sans',sans-serif] text-[6px] leading-[8px] font-medium text-[#b9ada2]">
      <Toolbar />
      <Overview />
      <main className="flex shrink-0 bg-[#3d3430] pl-[2px]">
        <Timeline />
        <TrackList />
      </main>
      <ModMatrix />
      <section aria-label="Devices" className="mt-[3px] ml-[4px] flex h-[102px] shrink-0">
        <BassDevice />
        <Meter mark="bg-[#8c7d1a]" level="h-[43px]" />
        <div className="w-px" />
        <Saturator />
        <div className="w-px" />
        <Meter mark="bg-[#c98a3a]" level="h-[50px]" />
        <div className="flex flex-1 items-center justify-center bg-[#3a312d] pl-[4px] text-[#b0a49a]">Drop Audio Effects Here</div>
      </section>
    </div>
  );
}
